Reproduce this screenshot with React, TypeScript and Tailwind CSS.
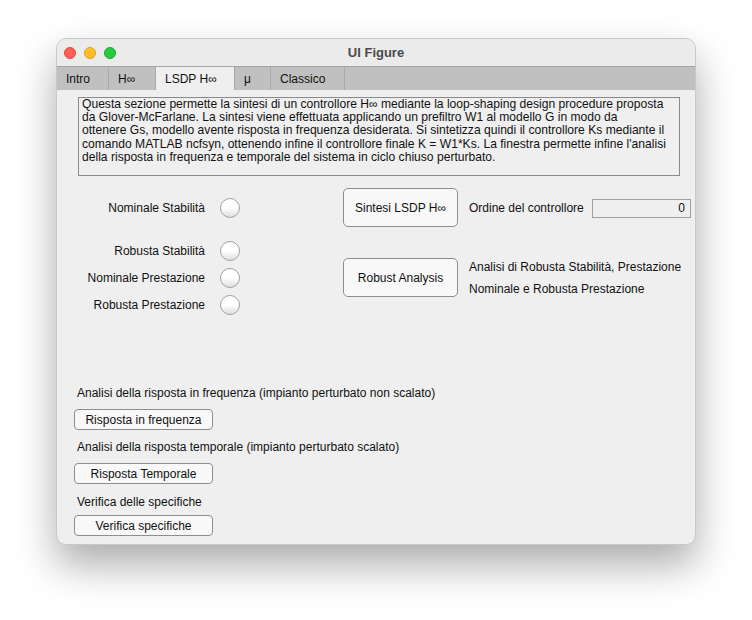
import React from 'react';

const tabs = [
  { label: 'Intro', w: 'w-[52px]' },
  { label: 'H∞', w: 'w-[47px]' },
  { label: 'LSDP H∞', w: 'w-[79px]', active: true },
  { label: 'μ', w: 'w-[36px]' },
  { label: 'Classico', w: 'w-[74px]' },
];

const descLines = [
  'Questa sezione permette la sintesi di un controllore H∞ mediante la loop-shaping design procedure proposta',
  'da Glover-McFarlane. La sintesi viene effettuata applicando un prefiltro W1 al modello G in modo da',
  'ottenere Gs, modello avente risposta in frequenza desiderata. Si sintetizza quindi il controllore Ks mediante il',
  "comando MATLAB ncfsyn, ottenendo infine il controllore finale K = W1*Ks. La finestra permette infine l'analisi",
  'della risposta in frequenza e temporale del sistema in ciclo chiuso perturbato.',
];

const Lamp = () => (
  <div className="w-[20px] h-[20px] rounded-full border border-[#a2a2a2] bg-gradient-to-b from-white via-white to-[#dedede] shrink-0" />
);

const LampRow = ({ label, className = '' }: { label: string; className?: string }) => (
  <div className={`w-[183px] h-[20px] flex items-center justify-end gap-[15px] ${className}`}>
    <span className="whitespace-nowrap">{label}</span>
    <Lamp />
  </div>
);

const SmallButton = ({ children, className = '' }: { children: React.ReactNode; className?: string }) => (
  <button className={`w-[139px] h-[21px] rounded-[4px] border border-[#8e8e8e] bg-[#f8f8f8] flex items-center justify-center ${className}`}>
    {children}
  </button>
);

const App = () => {
  return (
    <div className="w-[752px] h-[620px] bg-white pt-[38px] pl-[56px] font-['Liberation_Sans',Arial,sans-serif] text-[12px] text-[#111]">
      <div className="w-[640px] h-[507px] rounded-[10px] overflow-hidden bg-[#efefef] border border-[#c8c8c8] shadow-[0_20px_40px_rgba(0,0,0,0.33)] flex flex-col">
        {/* barra del titolo */}
        <div className="h-[28px] shrink-0 grid grid-cols-[1fr_auto_1fr] items-center bg-[#ebebeb] border-b border-[#a4a4a4]">
          <div className="flex items-center gap-[8px] pl-[7px]">
            <span className="w-[12px] h-[12px] rounded-full bg-[#ff5f57] border border-[#e2463f]" />
            <span className="w-[12px] h-[12px] rounded-full bg-[#febc2e] border border-[#e1a116]" />
            <span className="w-[12px] h-[12px] rounded-full bg-[#28c840] border border-[#1aab29]" />
          </div>
          <div className="font-bold text-[13px] text-[#4a4a4a]">UI Figure</div>
          <div />
        </div>

        {/* schede */}
        <div className="h-[23px] shrink-0 flex bg-[#c0c0c0]">
          {tabs.map((t) => (
            <div
              key={t.label}
              className={`${t.w} h-full flex items-center pl-[9px] border-r border-[#aaaaaa] ${t.active ? 'bg-[#efefef]' : ''}`}
            >
              {t.label}
            </div>
          ))}
        </div>

        {/* descrizione */}
        <div className="ml-[21px] mt-[7px] w-[602px] h-[79px] border border-[#8a8a8a] pl-[3px] leading-[13.2px] text-[12.1px] whitespace-nowrap">
          {descLines.map((l) => (
            <div key={l}>{l}</div>
          ))}
        </div>

        {/* controlli */}
        <div className="mt-[12px] flex">
          <div className="w-[286px] shrink-0">
            <LampRow label="Nominale Stabilità" className="mt-[10px]" />
            <LampRow label="Robusta Stabilità" className="mt-[23px]" />
            <LampRow label="Nominale Prestazione" className="mt-[7px]" />
            <LampRow label="Robusta Prestazione" className="mt-[7px]" />
          </div>
          <div className="w-[115px] shrink-0">
            <button className="w-full h-[39px] rounded-[5px] border border-[#8e8e8e] bg-[#f8f8f8]">Sintesi LSDP H∞</button>
            <button className="w-full h-[39px] mt-[31px] rounded-[5px] border border-[#8e8e8e] bg-[#f8f8f8]">Robust Analysis</button>
          </div>
          <div className="ml-[11px] w-[222px] shrink-0">
            <div className="mt-[10px] h-[20px] flex items-center justify-between">
              <span className="whitespace-nowrap">Ordine del controllore</span>
              <div className="w-[99px] h-[19px] border border-[#a0a0a0] bg-[#efefef] flex items-center justify-end pr-[5px]">0</div>
            </div>
            <div className="mt-[38px] leading-[22px] whitespace-nowrap">
              <div>Analisi di Robusta Stabilità, Prestazione</div>
              <div>Nominale e Robusta Prestazione</div>
            </div>
          </div>
        </div>

        {/* analisi */}
        <div className="mt-[70px] pl-[17px] leading-[16px]">
          <div className="ml-[3px]">Analisi della risposta in frequenza (impianto perturbato non scalato)</div>
          <SmallButton className="mt-[8px]">Risposta in frequenza</SmallButton>
          <div className="ml-[3px] mt-[9px]">Analisi della risposta temporale (impianto perturbato scalato)</div>
          <SmallButton className="mt-[8px]">Risposta Temporale</SmallButton>
          <div className="ml-[3px] mt-[10px]">Verifica delle specifiche</div>
          <SmallButton className="mt-[5px]">Verifica specifiche</SmallButton>
        </div>
      </div>
    </div>
  );
};

export default App;
